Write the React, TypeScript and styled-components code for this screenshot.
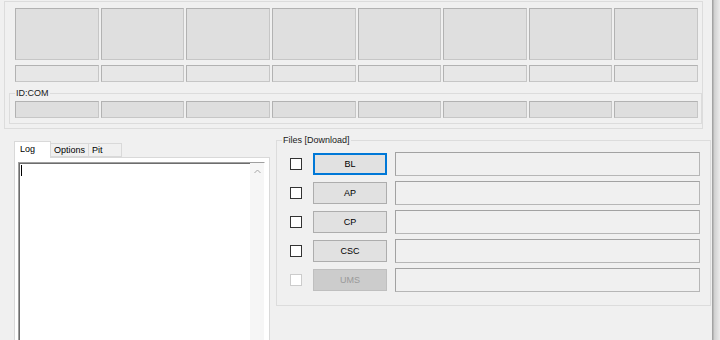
import React from 'react';
import styled, { createGlobalStyle } from 'styled-components';

const GlobalStyle = createGlobalStyle`
  html, body {
    margin: 0;
    padding: 0;
    background: #f0f0f0;
  }
  body {
    font-family: "Liberation Sans", Arial, sans-serif;
    font-size: 9px;
    color: #000;
  }
`;

const Window = styled.div`
  display: flex;
  width: 720px;
  height: 340px;
  overflow: hidden;
  background: #f0f0f0;
`;

const Main = styled.div`
  width: 712px;
  display: flex;
  flex-direction: column;
  overflow: hidden;

  & > * {
    flex-shrink: 0;
  }
`;

const Edge = styled.div`
  flex: 1;
  background: linear-gradient(to right, #a3a3a3 0, #a3a3a3 1px, #cfcfcf 2px, #ebebeb 8px);
`;

const StatusPanel = styled.div`
  box-sizing: border-box;
  margin: 1px 0 0 4px;
  width: 699px;
  height: 128px;
  border: 1px solid #dcdcdc;
  display: flex;
  flex-direction: column;
`;

const SlotRow = styled.div<{ $h: number; $top: number }>`
  display: grid;
  grid-template-columns: repeat(8, 1fr);
  gap: 2px;
  height: ${(p) => p.$h}px;
  margin: ${(p) => p.$top}px 4px 0 10px;
`;

const Slot = styled.div<{ $bg: string }>`
  box-sizing: border-box;
  background: ${(p) => p.$bg};
  border: 1px solid;
  border-color: #b2b2b2 #c6c6c6 #c6c6c6 #b2b2b2;
`;

const GroupBox = styled.fieldset`
  min-width: 0;
  margin: 6px 0 0 4px;
  width: 693px;
  box-sizing: border-box;
  padding: 0;
  border: 1px solid #dcdcdc;
`;

const GroupLabel = styled.legend`
  margin-left: 5px;
  padding: 0 1px;
  font-size: 9px;
  line-height: 11px;
  color: #1a1a1a;
`;

const ComRow = styled(SlotRow)`
  margin: 2px 3px 5px 5px;
`;

const Bottom = styled.div`
  display: flex;
  align-items: flex-start;
  padding-left: 14px;
  margin-top: 6px;
`;

const TabArea = styled.div`
  width: 256px;
  height: 220px;
  margin-top: 6px;
  display: flex;
  flex-direction: column;
`;

const TabStrip = styled.div`
  display: flex;
  align-items: flex-end;
  height: 16px;
`;

const Tab = styled.div<{ $w: number; $active?: boolean }>`
  position: relative;
  z-index: ${(p) => (p.$active ? 1 : 0)};
  box-sizing: border-box;
  width: ${(p) => p.$w}px;
  height: ${(p) => (p.$active ? 17 : 14)}px;
  margin-bottom: ${(p) => (p.$active ? -1 : 0)}px;
  padding: ${(p) => (p.$active ? '2px 0 0 5px' : '1px 0 0 3px')};
  background: ${(p) => (p.$active ? '#fff' : '#f0f0f0')};
  border: 1px solid #d9d9d9;
  border-bottom: ${(p) => (p.$active ? 'none' : '1px solid #d9d9d9')};
  border-left: ${(p) => (p.$active ? '1px solid #d9d9d9' : 'none')};
  line-height: 11px;
`;

const TabPanel = styled.div`
  flex: 1;
  display: flex;
  background: #fff;
  border: 1px solid #d9d9d9;
`;

const LogBox = styled.div`
  flex: 1;
  display: flex;
  margin: 4px 4px 0 3px;
  border: 1px solid;
  border-color: #a0a0a0 #fff #fff #a0a0a0;
  box-shadow: inset 1px 1px #6d6d6d;
`;

const LogText = styled.div`
  flex: 1;
  padding: 2px 0 0 2px;
`;

const Caret = styled.div`
  width: 1px;
  height: 11px;
  background: #000;
`;

const ScrollTrack = styled.div`
  width: 14px;
  background: #f6f6f6;
  display: flex;
  justify-content: center;
  padding-top: 6px;
  box-sizing: border-box;
`;

const FilesGroup = styled.fieldset`
  min-width: 0;
  box-sizing: border-box;
  margin: 0 0 0 6px;
  width: 435px;
  padding: 6px 10px 13px 0;
  border: 1px solid #dcdcdc;
  display: flex;
  flex-direction: column;
  gap: 5px;
`;

const FileRow = styled.div`
  display: flex;
  align-items: center;
  height: 24px;
  padding-left: 13px;
`;

const Check = styled.span<{ $disabled?: boolean }>`
  box-sizing: border-box;
  width: 12px;
  height: 12px;
  background: #fff;
  border: 1px solid ${(p) => (p.$disabled ? '#cccccc' : '#333')};
`;

const FileButton = styled.div<{ $focus?: boolean; $disabled?: boolean }>`
  box-sizing: border-box;
  width: 74px;
  height: 22px;
  margin: 0 8px 0 11px;
  display: flex;
  align-items: center;
  justify-content: center;
  background: ${(p) => (p.$disabled ? '#cccccc' : '#e1e1e1')};
  color: ${(p) => (p.$disabled ? '#9a9a9a' : '#000')};
  border: ${(p) => (p.$focus ? '2px solid #0078d7' : p.$disabled ? '1px solid #bfbfbf' : '1px solid #adadad')};
`;

const PathField = styled.div`
  flex: 1;
  height: 24px;
  box-sizing: border-box;
  background: #f0f0f0;
  border: 1px solid;
  border-color: #a2a2a2 #b6b6b6 #b6b6b6 #a2a2a2;
`;

const cols = Array.from({ length: 8 }, (_, i) => i);

const files = [
  { name: 'BL', focus: true },
  { name: 'AP' },
  { name: 'CP' },
  { name: 'CSC' },
  { name: 'UMS', disabled: true },
];

export default function App() {
  return (
    <>
      <GlobalStyle />
      <Window>
        <Main>
          <StatusPanel>
            <SlotRow $h={52} $top={6}>
              {cols.map((i) => (
                <Slot key={i} $bg="#dfdfdf" />
              ))}
            </SlotRow>
            <SlotRow $h={17} $top={5}>
              {cols.map((i) => (
                <Slot key={i} $bg="#e7e7e7" />
              ))}
            </SlotRow>
            <GroupBox>
              <GroupLabel>ID:COM</GroupLabel>
              <ComRow $h={17} $top={2}>
                {cols.map((i) => (
                  <Slot key={i} $bg="#dedede" />
                ))}
              </ComRow>
            </GroupBox>
          </StatusPanel>

          <Bottom>
            <TabArea>
              <TabStrip>
                <Tab $w={37} $active>Log</Tab>
                <Tab $w={38}>Options</Tab>
                <Tab $w={33}>Pit</Tab>
              </TabStrip>
              <TabPanel>
                <LogBox>
                  <LogText>
                    <Caret />
                  </LogText>
                  <ScrollTrack>
                    <svg width="7" height="5" viewBox="0 0 7 5">
                      <path d="M0.5 4 L3.5 1 L6.5 4" fill="none" stroke="#a6a6a6" strokeWidth="1" />
                    </svg>
                  </ScrollTrack>
                </LogBox>
              </TabPanel>
            </TabArea>

            <FilesGroup>
              <GroupLabel>Files [Download]</GroupLabel>
              {files.map((f) => (
                <FileRow key={f.name}>
                  <Check $disabled={f.disabled} />
                  <FileButton $focus={f.focus} $disabled={f.disabled}>
                    {f.name}
                  </FileButton>
                  <PathField />
                </FileRow>
              ))}
            </FilesGroup>
          </Bottom>
        </Main>
        <Edge />
      </Window>
    </>
  );
}
